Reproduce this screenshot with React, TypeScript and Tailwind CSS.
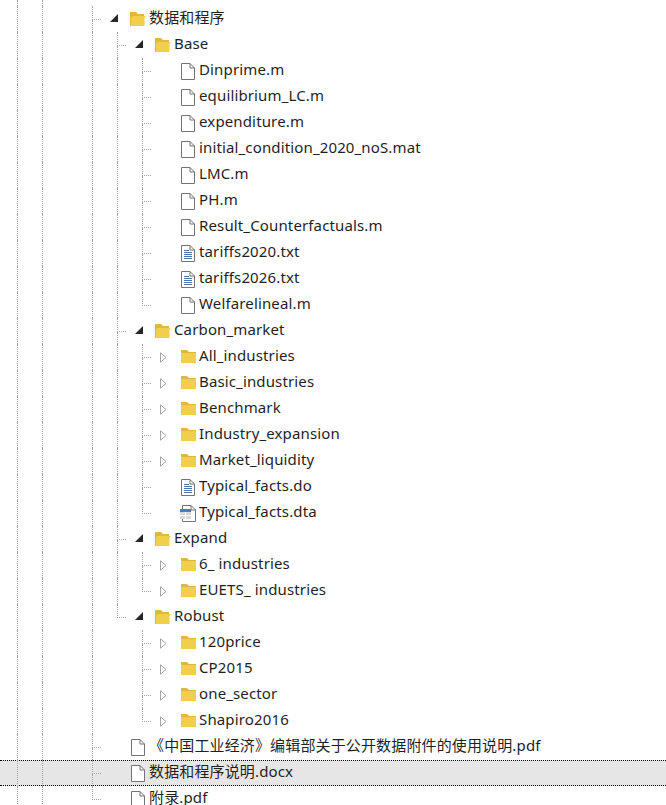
const FONT = "font-['Noto_Sans','Noto_Sans_CJK_SC',sans-serif]"
const GUIDE = "border-l border-dotted border-[#a3a3a3]"

type Kind = "open" | "closed" | "file" | "text" | "table"

type Item = {
  name: string
  kind: Kind
  // which ancestor guides carry on past this row
  guides: boolean[]
  last?: boolean
  selected?: boolean
}

const files = (names: string[], guides: boolean[], kind: Kind = "file") =>
  names.map((name) => ({ name, kind, guides }))

const ITEMS: Item[] = [
  { name: "数据和程序", kind: "open", guides: [] },
  { name: "Base", kind: "open", guides: [true] },
  ...files(
    ["Dinprime.m", "equilibrium_LC.m", "expenditure.m", "initial_condition_2020_noS.mat", "LMC.m", "PH.m", "Result_Counterfactuals.m"],
    [true, true],
  ),
  ...files(["tariffs2020.txt", "tariffs2026.txt"], [true, true], "text"),
  { name: "Welfarelineal.m", kind: "file", guides: [true, true], last: true },
  { name: "Carbon_market", kind: "open", guides: [true] },
  ...files(["All_industries", "Basic_industries", "Benchmark", "Industry_expansion", "Market_liquidity"], [true, true], "closed"),
  { name: "Typical_facts.do", kind: "text", guides: [true, true] },
  { name: "Typical_facts.dta", kind: "table", guides: [true, true], last: true },
  { name: "Expand", kind: "open", guides: [true] },
  { name: "6_ industries", kind: "closed", guides: [true, true] },
  { name: "EUETS_ industries", kind: "closed", guides: [true, true], last: true },
  { name: "Robust", kind: "open", guides: [true], last: true },
  ...files(["120price", "CP2015", "one_sector"], [true, false], "closed"),
  { name: "Shapiro2016", kind: "closed", guides: [true, false], last: true },
  { name: "《中国工业经济》编辑部关于公开数据附件的使用说明.pdf", kind: "file", guides: [] },
  { name: "数据和程序说明.docx", kind: "file", guides: [], selected: true },
  { name: "附录.pdf", kind: "file", guides: [], last: true },
]

const FileIcon = () => (
  <svg width="14" height="17" viewBox="0 0 14 17" fill="none">
    <path d="M0.5 0.5h8.5l4.5 4.5v11.5h-13z" fill="#fff" stroke="#737373" />
    <path d="M9 0.5v4.5h4.5" stroke="#737373" />
  </svg>
)

const TextIcon = () => (
  <svg width="14" height="17" viewBox="0 0 14 17" fill="none">
    <path d="M0.5 0.5h8.5l4.5 4.5v11.5h-13z" fill="#fff" stroke="#737373" />
    <path d="M9 0.5v4.5h4.5" stroke="#737373" />
    <path d="M3 5.5h5M3 7.5h8M3 9.5h8M3 11.5h8M3 13.5h8" stroke="#4a76ad" />
  </svg>
)

const TableIcon = () => (
  <svg width="16" height="17" viewBox="0 0 16 17" fill="none">
    <path d="M2.5 0.5h8.5l4.5 4.5v11.5h-13z" fill="#fff" stroke="#737373" />
    <path d="M11 0.5v4.5h4.5" stroke="#737373" />
    <rect x="0" y="4" width="11" height="10" fill="#d9d9d9" />
    <rect x="0" y="4" width="11" height="3" fill="#3f7fc4" />
    <path d="M5.5 7v7M0 10.5h11" stroke="#fff" />
  </svg>
)

const ClosedFolder = () => (
  <svg width="15" height="13" viewBox="0 0 15 13" fill="none">
    <path d="M0 0h6l2 2h7v11H0z" fill="#e4b53f" />
    <path d="M0 3h15v10H0z" fill="#f1cf4c" />
  </svg>
)

const OpenFolder = () => (
  <svg width="16" height="14" viewBox="0 0 16 14" fill="none">
    <path d="M0 0h6l2 2h6v3H2v9H0z" fill="#e4b53f" />
    <path d="M1 14V5.5L2.5 4H16l-1.5 2v8z" fill="#f1cf4c" />
  </svg>
)

const Arrow = ({ open }: { open: boolean }) =>
  open ? (
    <svg width="8" height="8" viewBox="0 0 8 8" className="-mt-[2px]">
      <path d="M8 0v8H0z" fill="#262626" />
    </svg>
  ) : (
    <svg width="7" height="11" viewBox="0 0 7 11" fill="none" className="mt-[1px]">
      <path d="M0.5 0.8v9.4L6 5.5z" fill="#fff" stroke="#a6a6a6" />
    </svg>
  )

const icons: Record<Kind, React.ReactNode> = {
  open: <OpenFolder />,
  closed: <ClosedFolder />,
  file: <FileIcon />,
  text: <TextIcon />,
  table: <TableIcon />,
}

const slots: Record<Kind, string> = {
  open: "pt-[6px]",
  closed: "pl-px pt-[6px]",
  file: "pl-px pt-[5px]",
  text: "pl-px pt-[5px]",
  table: "pt-[5px]",
}

const RootGuides = () => (
  <>
    <div className={`w-[25px] shrink-0 ${GUIDE}`} />
    <div className={`w-[50px] shrink-0 ${GUIDE}`} />
  </>
)

const Row = ({ item }: { item: Item }) => {
  const hasArrow = item.kind === "open" || item.kind === "closed"

  return (
    <div className={`h-[26px] border-y border-dotted ${item.selected ? "border-black bg-[#e6e6e6]" : "border-transparent"}`}>
      <div className="-my-px flex h-[26px] items-stretch pl-[17px]">
        <RootGuides />

        {item.guides.map((on, i) => (
          <div key={i} className={`w-[25px] shrink-0 ${on ? GUIDE : ""}`} />
        ))}

        <div className="flex w-[9px] shrink-0 flex-col">
          <div className={`h-[14px] border-b ${GUIDE}`} />
          {!item.last && <div className={`flex-1 ${GUIDE}`} />}
        </div>

        <div className="flex w-[29px] shrink-0 items-center pl-[9px]">{hasArrow && <Arrow open={item.kind === "open"} />}</div>

        <div className={`w-[19px] shrink-0 ${slots[item.kind]}`}>{icons[item.kind]}</div>

        <span className="-mt-[2px] whitespace-nowrap text-[15px] leading-[26px] tracking-[0.14px] text-[#1f1f1f]">{item.name}</span>
      </div>
    </div>
  )
}

export default function App() {
  return (
    <div className={`h-[805px] w-[666px] overflow-hidden bg-white ${FONT}`}>
      <div className="flex h-[6px] pl-[17px]">
        <RootGuides />
      </div>
      {ITEMS.map((item) => (
        <Row key={item.name} item={item} />
      ))}
    </div>
  )
}
